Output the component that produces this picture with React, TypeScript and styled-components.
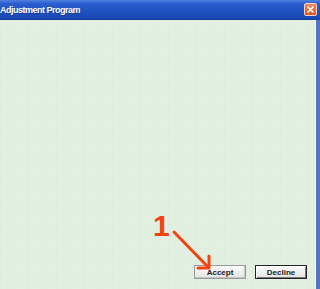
import styled, { createGlobalStyle } from "styled-components";

const GlobalStyle = createGlobalStyle`
  html, body {
    margin: 0;
    padding: 0;
    width: 320px;
    height: 289px;
    overflow: hidden;
    font-family: "Liberation Sans", Arial, sans-serif;
  }
  #root {
    height: 100%;
  }
`;

const Window = styled.div`
  display: flex;
  flex-direction: column;
  width: 320px;
  height: 289px;
`;

const TitleBar = styled.div`
  display: flex;
  align-items: center;
  justify-content: space-between;
  height: 19px;
  padding: 0 3px 0 0;
  background: linear-gradient(
    to bottom,
    #4f80e0 0%,
    #2a5cce 20%,
    #1f52c2 60%,
    #1846b0 100%
  );
  border-bottom: 1px solid #173f9e;
`;

const Title = styled.span`
  color: #ffffff;
  font-size: 9px;
  font-weight: bold;
  letter-spacing: -0.5px;
  text-shadow: 1px 1px 0 #143c98;
`;

const CloseButton = styled.div`
  display: flex;
  align-items: center;
  justify-content: center;
  width: 11px;
  height: 11px;
  border-radius: 2px;
  border: 1px solid #f2d3c6;
  background: linear-gradient(to bottom, #ee8a62, #d9542a);
`;

const Body = styled.div`
  position: relative;
  flex: 1;
  display: flex;
  flex-direction: column;
  justify-content: flex-end;
  border-right: 4px solid #5673c4;
  box-shadow: inset -1px 0 0 #f4f8f4;
  background-color: #e2f0e2;
  background-image: repeating-linear-gradient(
      to right,
      rgba(205, 225, 205, 0.18) 0 1px,
      transparent 1px 14px
    ),
    repeating-linear-gradient(
      to bottom,
      rgba(205, 225, 205, 0.18) 0 1px,
      transparent 1px 12px
    );
`;

const ButtonRow = styled.div`
  display: flex;
  justify-content: flex-end;
  gap: 9px;
  padding: 0 9px 10px 0;
`;

const Button = styled.button<{ $focused?: boolean }>`
  width: 52px;
  height: 14px;
  padding: 0;
  font-family: "Liberation Sans", Arial, sans-serif;
  font-size: 8px;
  font-weight: bold;
  color: #1a1a1a;
  background: linear-gradient(to bottom, #fbfbfb, #e4e4e4);
  border: 1px solid ${(p) => (p.$focused ? "#222" : "#9a9a9a")};
  box-shadow: ${(p) =>
    p.$focused
      ? "inset 1px 1px 0 #fff, inset -1px -1px 0 #777"
      : "inset -1px -1px 0 #c4c4c4"};
`;

const Annotation = styled.div`
  position: absolute;
  left: 152px;
  top: 192px;
  width: 64px;
  height: 62px;
`;

const Number = styled.span`
  position: absolute;
  left: 1px;
  top: -1px;
  color: #f2440e;
  font-size: 30px;
  font-weight: 900;
  line-height: 1;
`;

const Arrow = styled.svg`
  position: absolute;
  left: 0;
  top: 0;
`;

export default function App() {
  return (
    <>
      <GlobalStyle />
      <Window>
        <TitleBar>
          <Title>Adjustment Program</Title>
          <CloseButton>
            <svg width="7" height="7" viewBox="0 0 7 7">
              <path
                d="M1 1L6 6M6 1L1 6"
                stroke="#fff"
                strokeWidth="1.6"
                strokeLinecap="round"
              />
            </svg>
          </CloseButton>
        </TitleBar>
        <Body>
          <Annotation>
            <Number>1</Number>
            <Arrow width="64" height="62" viewBox="0 0 64 62">
              <path
                d="M22 20L56 55"
                stroke="#f2440e"
                strokeWidth="3"
                strokeLinecap="round"
              />
              <path
                d="M57 44L57 56L46 56"
                fill="none"
                stroke="#f2440e"
                strokeWidth="3"
                strokeLinecap="round"
                strokeLinejoin="round"
              />
            </Arrow>
          </Annotation>
          <ButtonRow>
            <Button>Accept</Button>
            <Button $focused>Decline</Button>
          </ButtonRow>
        </Body>
      </Window>
    </>
  );
}
